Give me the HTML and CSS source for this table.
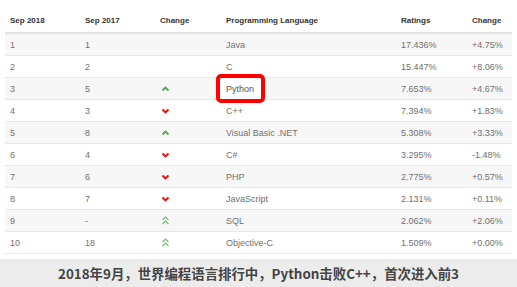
FILE: index.html
```html
<!DOCTYPE html>
<html lang="zh-CN">
<head>
    <meta charset="UTF-8">
    <title>TIOBE Index September 2018</title>
    <link rel="stylesheet" href="styles.css">
</head>
<body>
    <div class="page">
        <table class="rank-table">
            <thead>
                <tr>
                    <th class="col-now">Sep 2018</th>
                    <th class="col-prev">Sep 2017</th>
                    <th class="col-trend">Change</th>
                    <th class="col-lang">Programming Language</th>
                    <th class="col-rate">Ratings</th>
                    <th class="col-diff">Change</th>
                </tr>
            </thead>
            <tbody>
                <tr><td>1</td><td>1</td><td></td><td>Java</td><td>17.436%</td><td>+4.75%</td></tr>
                <tr><td>2</td><td>2</td><td></td><td>C</td><td>15.447%</td><td>+8.06%</td></tr>
                <tr>
                    <td>3</td><td>5</td>
                    <td><svg class="arrow" width="9" height="6" viewBox="0 0 9 6"><path d="M1.5 4.5 L4.5 1.5 L7.5 4.5" class="up"/></svg></td>
                    <td><span class="highlight">Python</span></td><td>7.653%</td><td>+4.67%</td>
                </tr>
                <tr>
                    <td>4</td><td>3</td>
                    <td><svg class="arrow" width="9" height="6" viewBox="0 0 9 6"><path d="M1.5 1.5 L4.5 4.5 L7.5 1.5" class="down"/></svg></td>
                    <td>C++</td><td>7.394%</td><td>+1.83%</td>
                </tr>
                <tr>
                    <td>5</td><td>8</td>
                    <td><svg class="arrow" width="9" height="6" viewBox="0 0 9 6"><path d="M1.5 4.5 L4.5 1.5 L7.5 4.5" class="up"/></svg></td>
                    <td>Visual Basic .NET</td><td>5.308%</td><td>+3.33%</td>
                </tr>
                <tr>
                    <td>6</td><td>4</td>
                    <td><svg class="arrow" width="9" height="6" viewBox="0 0 9 6"><path d="M1.5 1.5 L4.5 4.5 L7.5 1.5" class="down"/></svg></td>
                    <td>C#</td><td>3.295%</td><td>-1.48%</td>
                </tr>
                <tr>
                    <td>7</td><td>6</td>
                    <td><svg class="arrow" width="9" height="6" viewBox="0 0 9 6"><path d="M1.5 1.5 L4.5 4.5 L7.5 1.5" class="down"/></svg></td>
                    <td>PHP</td><td>2.775%</td><td>+0.57%</td>
                </tr>
                <tr>
                    <td>8</td><td>7</td>
                    <td><svg class="arrow" width="9" height="6" viewBox="0 0 9 6"><path d="M1.5 1.5 L4.5 4.5 L7.5 1.5" class="down"/></svg></td>
                    <td>JavaScript</td><td>2.131%</td><td>+0.11%</td>
                </tr>
                <tr>
                    <td>9</td><td>-</td>
                    <td><svg class="arrow" width="9" height="9" viewBox="0 0 9 9"><path d="M1.5 4 L4.5 1 L7.5 4 M1.5 8 L4.5 5 L7.5 8" class="double"/></svg></td>
                    <td>SQL</td><td>2.062%</td><td>+2.06%</td>
                </tr>
                <tr>
                    <td>10</td><td>18</td>
                    <td><svg class="arrow" width="9" height="9" viewBox="0 0 9 9"><path d="M1.5 4 L4.5 1 L7.5 4 M1.5 8 L4.5 5 L7.5 8" class="double"/></svg></td>
                    <td>Objective-C</td><td>1.509%</td><td>+0.00%</td>
                </tr>
            </tbody>
        </table>
        <div class="caption">2018年9月，世界编程语言排行中，Python击败C++，首次进入前3</div>
    </div>
</body>
</html>
```

FILE: styles.css
```css
* {
    margin: 0;
    padding: 0;
    box-sizing: border-box;
}

body {
    font-family: 'Liberation Sans', Arial, sans-serif;
    background: #fff;
    width: 517px;
    height: 287px;
    overflow: hidden;
}

.page {
    display: flex;
    flex-direction: column;
    height: 287px;
}

.rank-table {
    margin: 8px 5px 0 5px;
    width: 507px;
    border-collapse: separate;
    border-spacing: 0;
    table-layout: fixed;
}

.rank-table th {
    height: 26px;
    padding: 0 5px;
    text-align: left;
    font-size: 8px;
    font-weight: bold;
    color: #333;
    border-bottom: 2px solid #e3e3e3;
    vertical-align: middle;
}

.col-now { width: 75px; }
.col-prev { width: 75px; }
.col-trend { width: 66px; }
.col-lang { width: 175px; }
.col-rate { width: 71px; }
.col-diff { width: 45px; }

.rank-table td {
    height: 22px;
    padding: 0 5px;
    font-size: 9px;
    color: #707070;
    border-bottom: 1px solid #e8e8e8;
    vertical-align: middle;
    position: relative;
}

.rank-table tbody tr:nth-child(odd) td {
    background: #f7f7f7;
}

.arrow {
    display: block;
    margin-left: 1px;
    fill: none;
}

.arrow .up {
    stroke: #4cae4c;
    stroke-width: 1.8;
}

.arrow .down {
    stroke: #e0100c;
    stroke-width: 1.8;
}

.arrow .double {
    stroke: #6cc26c;
    stroke-width: 1.2;
}

.highlight {
    position: relative;
    color: #555;
}

.highlight::before {
    content: '';
    position: absolute;
    left: -10px;
    right: -11px;
    top: -10px;
    bottom: -9px;
    border: 4px solid #f00;
    border-radius: 5px;
    background: #fff;
    z-index: -1;
}

.rank-table td:has(.highlight) {
    z-index: 0;
}

.caption {
    margin-top: 5px;
    flex: 1;
    background: #ececec;
    display: flex;
    align-items: center;
    justify-content: center;
    font-family: 'Noto Sans CJK SC', 'Noto Sans', sans-serif;
    font-size: 13.4px;
    font-weight: bold;
    color: #444;
}
```
